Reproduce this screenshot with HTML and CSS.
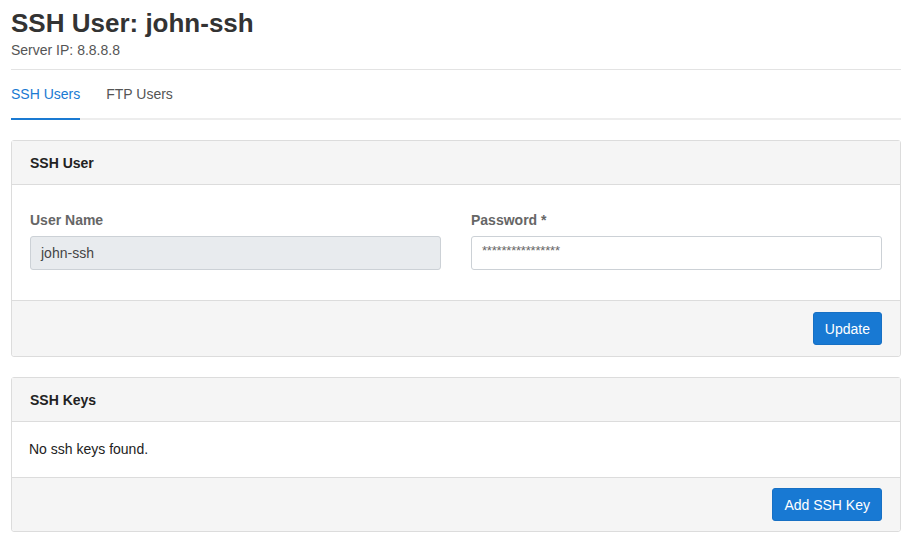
FILE: index.html
```html
<!DOCTYPE html>
<html>
<head>
<meta charset="utf-8">
<link rel="stylesheet" href="styles.css">
</head>
<body>
<div class="page">
  <h1 class="title">SSH User: john-ssh</h1>
  <div class="subtitle">Server IP: 8.8.8.8</div>
  <div class="divider"></div>
  <nav class="tabs">
    <a class="tab active">SSH Users</a>
    <a class="tab">FTP Users</a>
  </nav>

  <section class="card">
    <div class="card-header">SSH User</div>
    <div class="card-body form-grid">
      <div class="field">
        <label class="label">User Name</label>
        <div class="input disabled">john-ssh</div>
      </div>
      <div class="field">
        <label class="label">Password *</label>
        <div class="input password">****************</div>
      </div>
    </div>
    <div class="card-footer">
      <button class="btn">Update</button>
    </div>
  </section>

  <section class="card">
    <div class="card-header">SSH Keys</div>
    <div class="card-body text">No ssh keys found.</div>
    <div class="card-footer compact">
      <button class="btn">Add SSH Key</button>
    </div>
  </section>
</div>
</body>
</html>
```

FILE: styles.css
```css
* { box-sizing: border-box; }
html, body { margin: 0; padding: 0; background: #fff; }
body {
  font-family: "Liberation Sans", Arial, sans-serif;
  color: #333;
  font-size: 14px;
}
.page {
  width: 890px;
  margin-left: 11px;
  padding-top: 8px;
}
.title {
  margin: 0;
  font-size: 26px;
  line-height: 30px;
  font-weight: bold;
  color: #333;
}
.subtitle {
  margin-top: 3px;
  font-size: 14px;
  line-height: 18px;
  color: #555;
}
.divider {
  margin-top: 10px;
  height: 1px;
  background: #e3e3e3;
}
.tabs {
  display: flex;
  border-bottom: 2px solid #ededed;
  margin-top: 0;
}
.tab {
  display: block;
  font-size: 14px;
  line-height: 18px;
  padding: 15px 0 15px;
  margin-right: 26px;
  margin-bottom: -2px;
  color: #555;
  border-bottom: 2px solid transparent;
}
.tab.active {
  color: #1a7ad2;
  border-bottom-color: #1a7ad2;
}
.card {
  margin-top: 20px;
  border: 1px solid #dcdcdc;
  border-radius: 3px;
  background: #fff;
}
.card-header {
  background: #f5f5f5;
  border-bottom: 1px solid #dcdcdc;
  padding: 13px 18px 12px;
  font-weight: bold;
  font-size: 14px;
  line-height: 18px;
  color: #222;
}
.card-body {
  padding: 18px;
}
.card-body.text {
  padding: 18px 17px 18px;
  line-height: 19px;
  color: #222;
}
.form-grid {
  display: grid;
  grid-template-columns: 1fr 1fr;
  column-gap: 30px;
  padding: 26px 18px 30px;
}
.label {
  display: block;
  font-weight: bold;
  color: #666;
  font-size: 14px;
  line-height: 18px;
  margin-bottom: 7px;
}
.input {
  height: 34px;
  border: 1px solid #ccd1d6;
  border-radius: 3px;
  padding: 0 10px;
  line-height: 32px;
  font-size: 14px;
  color: #555;
  background: #fff;
}
.input.disabled {
  background: #e8ebee;
  color: #444;
}
.input.password {
  font-size: 13px;
  color: #666;
  letter-spacing: -0.2px;
  line-height: 27px;
}
.card-footer {
  background: #f5f5f5;
  border-top: 1px solid #dcdcdc;
  padding: 11px 18px 11px;
  display: flex;
  justify-content: flex-end;
  border-radius: 0 0 3px 3px;
}
.card-footer.compact {
  padding: 10px 18px 10px;
}
.btn {
  font-family: "Liberation Sans", Arial, sans-serif;
  background: #1879d3;
  color: #fff;
  border: 1px solid #1770c4;
  border-radius: 3px;
  font-size: 14px;
  line-height: 18px;
  padding: 7px 11px;
  height: 33px;
}
```
